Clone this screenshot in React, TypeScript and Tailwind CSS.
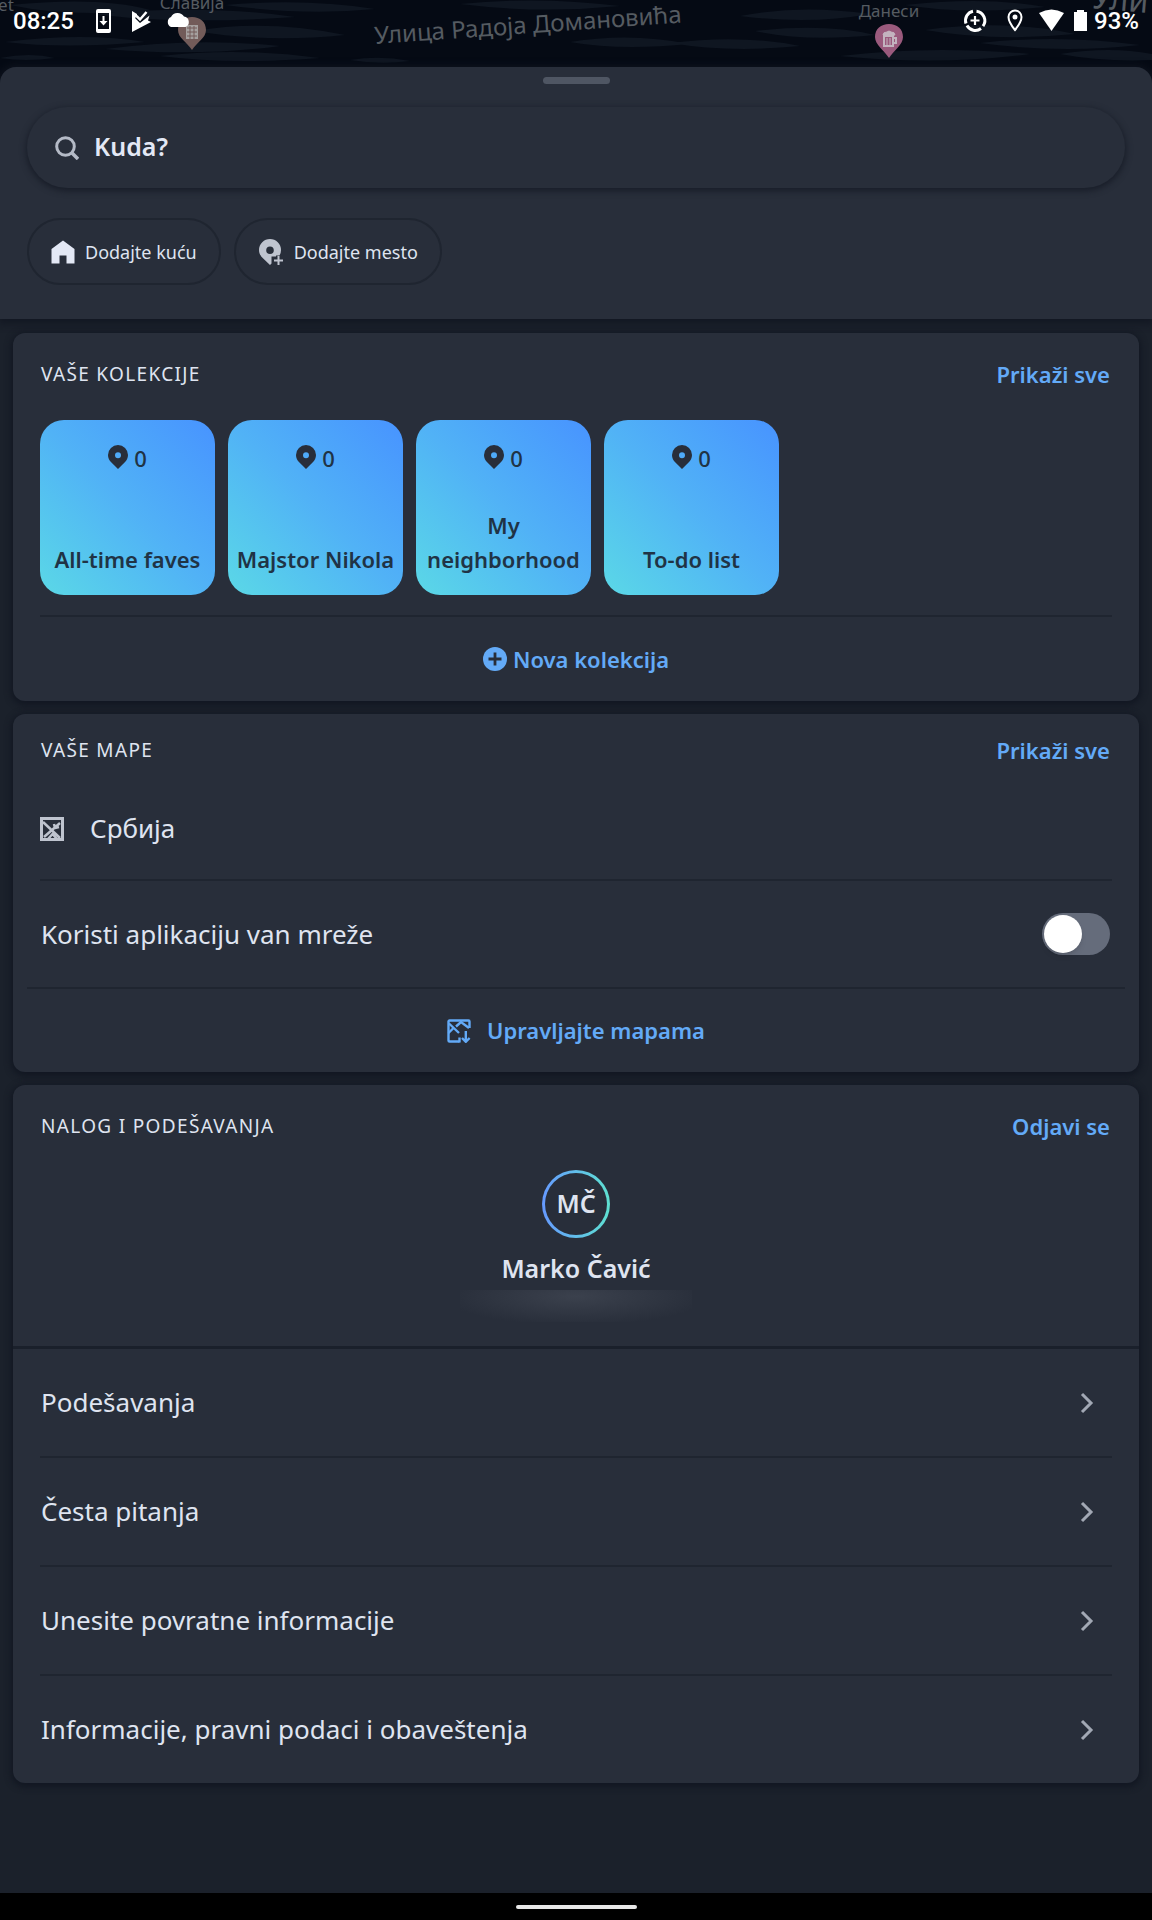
import type { ReactNode } from 'react';

type Collection = {
  name: string;
  places: number;
};

const collections: Collection[] = [
  { name: 'All-time faves', places: 0 },
  { name: 'Majstor Nikola', places: 0 },
  { name: 'My neighborhood', places: 0 },
  { name: 'To-do list', places: 0 },
];

const menuItems = [
  'Podešavanja',
  'Česta pitanja',
  'Unesite povratne informacije',
  'Informacije, pravni podaci i obaveštenja',
];

function PinIcon() {
  return (
    <svg viewBox="0 0 20 24" className="mb-1 h-6 w-5 text-[#282e3a]" fill="currentColor" aria-hidden="true">
      <path
        fillRule="evenodd"
        d="M10 0a10 10 0 0 0-10 10c0 3 1.200 5.300 3.200 7.300L10 24l6.800-6.700C18.800 15.300 20 13 20 10A10 10 0 0 0 10 0Zm0 7.200a3 3 0 1 1 0 6 3 3 0 0 1 0-6Z"
      />
    </svg>
  );
}

function PlacePlusIcon() {
  return (
    <svg viewBox="0 0 26 28" className="h-7 w-[26px] text-[#bfc4cf]" aria-hidden="true">
      <path
        fill="currentColor"
        fillRule="evenodd"
        d="M12 1A11 11 0 0 0 1 12c0 3.400 1.700 6.200 4.200 8.600L12 27l1.500-1.500V18.500H21A11 11 0 0 0 23 12 11 11 0 0 0 12 1Zm0 7.500a3.800 3.800 0 1 1 0 7.600 3.800 3.800 0 0 1 0-7.600Z"
      />
      <path d="M20.500 17.500v10M15.500 22.500h10" stroke="#282e3a" strokeWidth="5" />
      <path d="M20.500 18v9M16 22.500h9" stroke="currentColor" strokeWidth="2" />
    </svg>
  );
}

function SearchIcon() {
  return (
    <svg viewBox="0 0 24 24" className="size-6 shrink-0 text-[#b4bac6]" fill="none" stroke="currentColor" aria-hidden="true">
      <circle cx="10.500" cy="10.500" r="8.800" strokeWidth="3" />
      <path d="m16.500 16.500 6.500 6.500" strokeWidth="3.500" />
    </svg>
  );
}

function HomeIcon() {
  return (
    <svg viewBox="0 0 24 24" className="size-6 text-[#e3e8f5]" fill="currentColor" aria-hidden="true">
      <path d="M12 0.500 23.500 9v14.500H15.500v-8h-7v8H0.500V9Z" />
    </svg>
  );
}

function MapIcon() {
  return (
    <svg viewBox="0 0 24 24" className="size-6 text-[#bfc4cf]" fill="none" stroke="currentColor" strokeWidth="2.500" aria-hidden="true">
      <rect x="1.500" y="1.500" width="21" height="21" strokeWidth="3" />
      <path d="m3 5 17 16M4 20 20 6M14 7l1 4 4-1M8 22l4.500-5 4.500 5" />
    </svg>
  );
}

function MapDownloadIcon() {
  return (
    <svg viewBox="0 0 24 24" className="size-6" fill="none" stroke="currentColor" strokeWidth="2.400" aria-hidden="true">
      <path d="M12.500 22.500h-10a1 1 0 0 1-1-1v-19a1 1 0 0 1 1-1h19a1 1 0 0 1 1 1V9" />
      <path d="m2 4.500 10 9.500M1.500 14 6 9.500M9 7.500 14 3l8 6M12.500 18.500v5" />
      <path d="M18.800 12v10M15 19l3.800 3.800L22.600 19" />
    </svg>
  );
}

function PlusCircleIcon() {
  return (
    <svg viewBox="0 0 24 24" className="size-6" aria-hidden="true">
      <circle cx="12" cy="12" r="12" fill="currentColor" />
      <path d="M12 5.500v13M5.500 12h13" stroke="#282e3a" strokeWidth="2.800" />
    </svg>
  );
}

function ChevronIcon() {
  return (
    <svg viewBox="0 0 14 22" className="mr-[18px] h-[22px] w-3.5 shrink-0 text-[#a2a8b4]" fill="none" stroke="currentColor" strokeWidth="3" aria-hidden="true">
      <path d="m2 2 9 9-9 9" />
    </svg>
  );
}

// Strip of the map that stays visible above the sheet
function MapStrip() {
  return (
    <svg
      viewBox="0 0 1152 84"
      preserveAspectRatio="xMidYMin slice"
      className="absolute inset-x-0 top-0 h-[84px] w-full bg-[#050a14] font-['Noto_Sans',sans-serif]"
      aria-hidden="true"
    >
      <g fill="#0f1621">
        <path d="M10 5q90-9 140 5q-80 8-140-5ZM95 14q110-10 200 3q-120 8-200-3ZM195 31q70-12 150 4q-80 8-150-4ZM5 42q80-10 140 0q-80 7-140 0ZM105 49q90-12 175-3q-80 11-175 3ZM0 58q30-6 55 0q-30 4-55 0ZM160 56q80-9 160 2q-90 7-160-2ZM225 5q80-7 150 4q-70 7-150-4ZM350 60q30-5 60 1q-30 4-60-1Z" />
        <path d="M460 4q80-8 160 2q-80 8-160-2ZM570 42q60-10 120 2q-70 7-120-2ZM670 43q70-9 130 3q-70 7-130-3ZM740 16q60-12 130-2q-60 11-130 2ZM755 31q70-8 120 4q-70 7-120-4ZM840 56q90-11 190-2q-90 12-190 2ZM925 30q80-11 150 4q-80 8-150-4ZM980 43q80-9 160 2q-80 9-160-2ZM905 5q80-9 140 2q-80 8-140-2ZM1060 54q50-8 92 0v6q-50 2-92-6Z" />
      </g>
      <g fill="#555b61" fontSize="17">
        <text x="-11" y="11">ket</text>
        <text x="192" y="9" textAnchor="middle">Славија</text>
        <text x="889" y="17" textAnchor="middle">Данеси</text>
        <text x="375" y="44" fontSize="24" transform="rotate(-4 375 44)">Улица Радоја Домановића</text>
        <text x="1091" y="8" fontSize="32" transform="rotate(5 1091 8)">Ули</text>
      </g>
      <path d="M192 17c-8 0-14 5-14 13 0 8 9 12 14 20 5-8 14-12 14-20 0-8-6-13-14-13Z" fill="#725b59" />
      <path d="M186 25h12v14h-12Z" fill="#a5a09f" />
      <path d="M187 28h10M187 32h10M187 36h10M190 26v13M194 26v13" stroke="#725b59" />
      <path d="M889 24c-8 0-14 5-14 13 0 8 9 13 14 21 5-8 14-13 14-21 0-8-6-13-14-13Z" fill="#9a5a7d" />
      <path d="M884 36h9v10h-9ZM893 38h3v5h-3" fill="none" stroke="#c3b3bf" strokeWidth="2" />
      <path d="M883 35q0-3 4-3 2-2 4 0 4 0 4 3ZM887 38v7M890 38v7" fill="#c3b3bf" stroke="#c3b3bf" />
    </svg>
  );
}

function StatusBar() {
  return (
    <header className="relative flex h-[67px] items-start justify-between px-[13px] text-white">
      <MapStrip />
      <div className="relative flex h-[42px] items-center font-['Roboto',sans-serif] text-2xl font-medium">
        <time>08:25</time>
        <svg viewBox="0 0 96 28" className="ml-[22px] h-7 w-24" fill="currentColor" aria-hidden="true">
          <path fillRule="evenodd" d="M2 2h11a2 2 0 0 1 2 2v20a2 2 0 0 1-2 2H2a2 2 0 0 1-2-2V4a2 2 0 0 1 2-2Zm0 4v16h11V6Z" />
          <path d="M6.500 9h2v5h3l-4 4.500-4-4.500h3Z" />
          <path d="m36 4 5 3v2l-2 2 5 5L53.500 8.500 52 13.500l3 1.500L36 25Z" />
          <path d="m40.500 9 3.500 3.500L50.500 5" fill="none" stroke="currentColor" strokeWidth="2.500" />
          <path d="M75 20a5.500 5.500 0 0 1 0-10 7.500 7.500 0 0 1 13-.5 5.500 5.500 0 0 1 1.500 10.500Z" />
        </svg>
      </div>
      <div className="relative flex h-[42px] items-center font-['Roboto',sans-serif] text-2xl font-medium">
        <svg viewBox="0 0 124 26" className="mr-[7px] h-[26px] w-[124px]" fill="none" stroke="currentColor" aria-hidden="true">
          <path d="M13.500 3.200a9.500 9.500 0 0 1 6.500 15M18 20.500a9.500 9.500 0 0 1-14-3M3 15.500A9.500 9.500 0 0 1 10 3.200" strokeWidth="3" />
          <path d="M12 8v9M7.500 12.500h9" strokeWidth="2.200" />
          <path d="M52 2.500a6.500 6.500 0 0 0-6.500 6.500c0 5 6.500 13 6.500 13s6.500-8 6.500-13A6.500 6.500 0 0 0 52 2.500Z" strokeWidth="2" />
          <circle cx="52" cy="9" r="2.500" fill="currentColor" stroke="none" />
          <path d="M76 5q12.500-7 25 0L88.500 23Z" fill="currentColor" stroke="none" />
          <path d="M111 4h3V2h7v2h3v19h-13Z" fill="currentColor" stroke="none" />
        </svg>
        <span>93%</span>
      </div>
    </header>
  );
}

type CardProps = {
  title: string;
  action: string;
  compact?: boolean;
  children: ReactNode;
};

function Card({ title, action, compact = false, children }: CardProps) {
  return (
    <section className="rounded-xl bg-[#282e3a] shadow-[0_2px_6px_2px_#121722]">
      <div className={`flex items-center justify-between pr-[29px] pl-7 ${compact ? 'h-[72px]' : 'h-[82px]'}`}>
        <h2 className="text-[19px] tracking-[0.07em]">{title}</h2>
        <button type="button" className="text-[22px] font-semibold text-[#63aaf7]">
          {action}
        </button>
      </div>
      {children}
    </section>
  );
}

function CollectionTile({ collection }: { collection: Collection }) {
  return (
    <li>
      <button
        type="button"
        className="flex size-[175px] flex-col items-center justify-between rounded-3xl bg-linear-to-tr from-[#5bd8e6] via-[#51b2f6] to-[#4893ff] px-1 pt-[22px] pb-[19px] text-[22px] font-semibold text-[#203345]"
      >
        <span className="flex items-center gap-1.5 font-medium">
          <PinIcon />
          {collection.places}
        </span>
        <span className="leading-[34px]">{collection.name}</span>
      </button>
    </li>
  );
}

function OfflineToggle() {
  return (
    <label className="flex h-[106px] items-center justify-between pr-[29px] pl-7 text-[26px]">
      Koristi aplikaciju van mreže
      <input
        type="checkbox"
        role="switch"
        className="h-[42px] w-[68px] cursor-pointer appearance-none rounded-full bg-[#656c7b] p-0.5 before:block before:size-[38px] before:rounded-full before:bg-white before:shadow-md before:content-[''] checked:bg-[#63aaf7] checked:before:translate-x-[26px]"
      />
    </label>
  );
}

export default function App() {
  return (
    <div className="flex min-h-screen flex-col bg-[#1b212b] font-['Noto_Sans',sans-serif] text-[#dfe4f0]">
      <StatusBar />

      <div className="relative rounded-t-2xl bg-[#282e3a] px-[27px] pt-2.5 pb-[34px] shadow-[0_2px_8px_2px_#121722]">
        <div className="mx-auto h-[7px] w-[67px] rounded-full bg-[#4f5663]" />
        <label className="mt-[23px] flex h-[81px] items-center gap-[15px] rounded-full px-7 shadow-[0_2px_6px_1px_#181d28]">
          <SearchIcon />
          <input
            type="search"
            aria-label="Kuda?"
            placeholder="Kuda?"
            className="min-w-0 flex-1 bg-transparent pb-0.5 text-[25px] font-semibold outline-none placeholder:text-[#e3e8f5]"
          />
        </label>
        <div className="mt-[30px] flex gap-[13px]">
          <button type="button" className="flex h-[67px] items-center gap-2.5 rounded-full border-2 border-[#1f2530] px-[22px] text-lg">
            <HomeIcon />
            Dodajte kuću
          </button>
          <button type="button" className="flex h-[67px] items-center gap-2.5 rounded-full border-2 border-[#1f2530] px-[22px] text-lg">
            <PlacePlusIcon />
            Dodajte mesto
          </button>
        </div>
      </div>

      <main className="grid gap-[13px] px-[13px] py-3.5">
        <Card title="VAŠE KOLEKCIJE" action="Prikaži sve">
          <ul className="mx-[27px] flex gap-[13px] overflow-x-auto pt-[5px] pb-5">
            {collections.map((collection) => (
              <CollectionTile key={collection.name} collection={collection} />
            ))}
          </ul>
          <div className="mx-[27px] border-t-2 border-[#1f2530]">
            <button type="button" className="flex h-[84px] w-full items-center justify-center gap-1.5 text-[22px] font-semibold text-[#63aaf7]">
              <PlusCircleIcon />
              Nova kolekcija
            </button>
          </div>
        </Card>

        <Card title="VAŠE MAPE" action="Prikaži sve" compact>
          <div className="mx-[27px] flex h-[95px] items-center gap-[26px] border-b-2 border-[#1f2530] pb-2 text-[26px]">
            <MapIcon />
            Србија
          </div>
          <OfflineToggle />
          <div className="mx-3.5 border-t-2 border-[#1f2530]">
            <button type="button" className="flex h-[83px] w-full items-center justify-center gap-4 text-[22px] font-semibold text-[#63aaf7]">
              <MapDownloadIcon />
              Upravljajte mapama
            </button>
          </div>
        </Card>

        <Card title="NALOG I PODEŠAVANJA" action="Odjavi se">
          <div className="flex flex-col items-center border-b-3 border-[#1a202b] pt-[3px] pb-6">
            <div className="rounded-full bg-linear-to-r from-[#6699ff] to-[#5ee0d0] p-[3px]">
              <div className="flex size-[62px] items-center justify-center rounded-full bg-[#282e3a] text-[25px] font-semibold">MČ</div>
            </div>
            <p className="mt-3 text-[25px] leading-9 font-semibold">Marko Čavić</p>
            <div className="mt-1 h-8 w-[232px] bg-radial-[at_50%_20%] from-[#3b414d] to-[#282e3a] to-80%" />
          </div>
          <ul className="mx-[27px] divide-y-2 divide-[#1f2530]">
            {menuItems.map((item) => (
              <li key={item}>
                <button type="button" className="flex h-[107px] w-full items-center justify-between pl-px text-left text-[26px]">
                  {item}
                  <ChevronIcon />
                </button>
              </li>
            ))}
          </ul>
        </Card>
      </main>

      <footer className="mt-auto flex h-[27px] items-center justify-center bg-black">
        <div className="h-1 w-[121px] rounded-full bg-[#e8e8e8]" />
      </footer>
    </div>
  );
}
